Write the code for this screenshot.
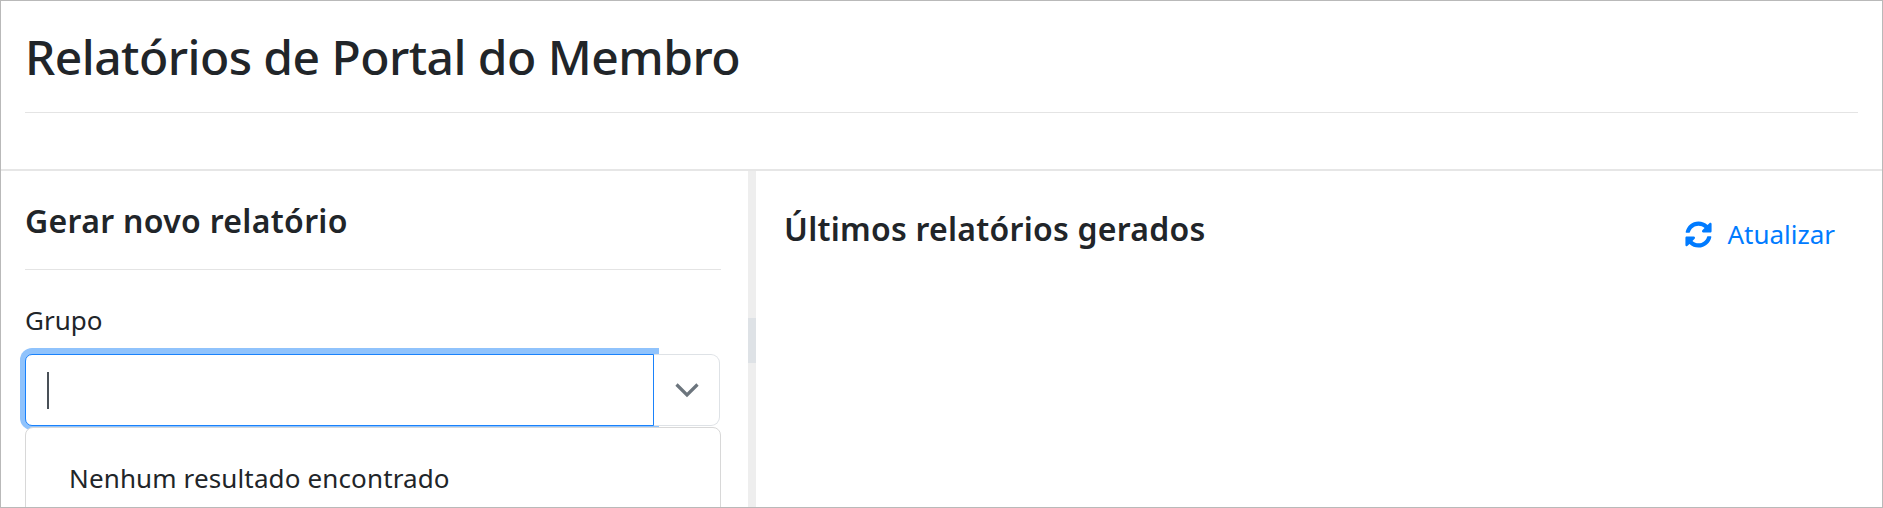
<div class="page">
  <header class="top">
    <h1>Relatórios de Portal do Membro</h1>
    <hr />
  </header>
  <div class="cols">
    <section class="left">
      <h2>Gerar novo relatório</h2>
      <hr />
      <label for="grupo">Grupo</label>
      <div class="group">
        <div class="input" id="grupo"><span class="caret"></span></div>
        <div class="btn">
          <svg width="26" height="16" viewBox="0 0 26 16"><path d="M2.5 2.5 13 13 23.5 2.5" fill="none" stroke="#6c757d" stroke-width="3.2" /></svg>
        </div>
      </div>
      <div class="menu">Nenhum resultado encontrado</div>
    </section>
    <div class="track"><div class="thumb"></div></div>
    <section class="right">
      <h2>Últimos relatórios gerados</h2>
      <div class="refresh">
        <svg width="27" height="27" viewBox="0 0 512 512"><path fill="#007bff" d="M370.72 133.28C339.458 104.008 298.888 87.962 255.848 88c-77.458.068-144.328 53.178-162.791 126.85-1.344 5.363-6.122 9.15-11.651 9.15H24.103c-7.498 0-13.194-6.807-11.807-14.176C33.933 94.924 134.813 8 256 8c66.448 0 126.791 26.136 171.315 68.685L463.03 40.97C478.149 25.851 504 36.559 504 57.941V192c0 13.255-10.745 24-24 24H345.941c-21.382 0-32.09-25.851-16.971-40.971l41.75-41.749zM32 296h134.059c21.382 0 32.09 25.851 16.971 40.971l-41.75 41.75c31.262 29.273 71.835 45.319 114.876 45.28 77.418-.07 144.315-53.144 162.787-126.849 1.344-5.363 6.122-9.15 11.651-9.15h57.304c7.498 0 13.194 6.807 11.807 14.176C478.067 417.076 377.187 504 256 504c-66.448 0-126.791-26.136-171.315-68.685L48.97 471.03C33.851 486.149 8 475.441 8 454.059V320c0-13.255 10.745-24 24-24z" /></svg>
        <span>Atualizar</span>
      </div>
    </section>
  </div>
</div>

<style>
  :global(body) { margin: 0; background: #fff; }
  .page {
    width: 1883px; height: 508px; box-sizing: border-box;
    border: 1px solid #b9b9b9; overflow: hidden;
    font-family: "Noto Sans", "Open Sans", sans-serif; color: #212529;
    display: flex; flex-direction: column;
  }
  .top { height: 170px; box-sizing: border-box; padding: 0 24px; border-bottom: 2px solid #e6e6e6; flex: none; }
  h1 { margin: 0; padding-top: 26px; height: 111px; box-sizing: border-box; font-size: 48px; line-height: 60px; font-weight: 500; letter-spacing: -0.55px; }
  hr { margin: 0; border: 0; border-top: 1px solid #e4e4e4; }
  .cols { flex: 1; display: flex; min-height: 0; }
  .left { width: 747px; flex: none; box-sizing: border-box; padding: 0 27px 0 24px; }
  .left h2 { margin: 0; padding-top: 30px; height: 98px; box-sizing: border-box; font-size: 32px; line-height: 40px; font-weight: 600; letter-spacing: 0.32px; }
  label { display: block; margin-top: 33px; font-size: 26px; line-height: 34px; }
  .group { display: flex; margin-top: 17px; height: 72px; width: 695px; }
  .input {
    width: 629px; box-sizing: border-box; border: 1px solid #1a82fb; border-radius: 7px 0 0 7px;
    box-shadow: 0 -1px 0 5px #90c3fc; display: flex; align-items: center; padding-left: 21px;
    position: relative; background: #fff;
  }
  .caret { width: 2px; height: 37px; background: #495057; }
  .btn {
    flex: 1; box-sizing: border-box; border: 1px solid #dee2e6; border-left: 0; border-radius: 0 9px 9px 0;
    background: #fff; display: flex; align-items: center; justify-content: center; position: relative;
  }
  .menu {
    position: relative; margin-top: 1px; width: 696px; box-sizing: border-box; height: 100px;
    border: 1px solid #d8d8d8; border-radius: 8px 8px 0 0; background: #fff;
    padding: 33px 0 0 43px; font-size: 26px; line-height: 34px; letter-spacing: 0.13px;
  }
  .track { width: 8px; flex: none; background: #eeeeee; }
  .thumb { margin-top: 147px; height: 45px; background: #dee2e6; }
  .right { flex: 1; display: flex; justify-content: space-between; align-items: flex-start; padding: 0 47px 0 28px; }
  .right h2 { margin: 0; padding-top: 36px; font-size: 32px; line-height: 44px; font-weight: 600; letter-spacing: 0.25px; }
  .refresh { margin-top: 46px; display: flex; align-items: center; gap: 15px; color: #007bff; font-size: 26px; line-height: 34px; }
</style>
